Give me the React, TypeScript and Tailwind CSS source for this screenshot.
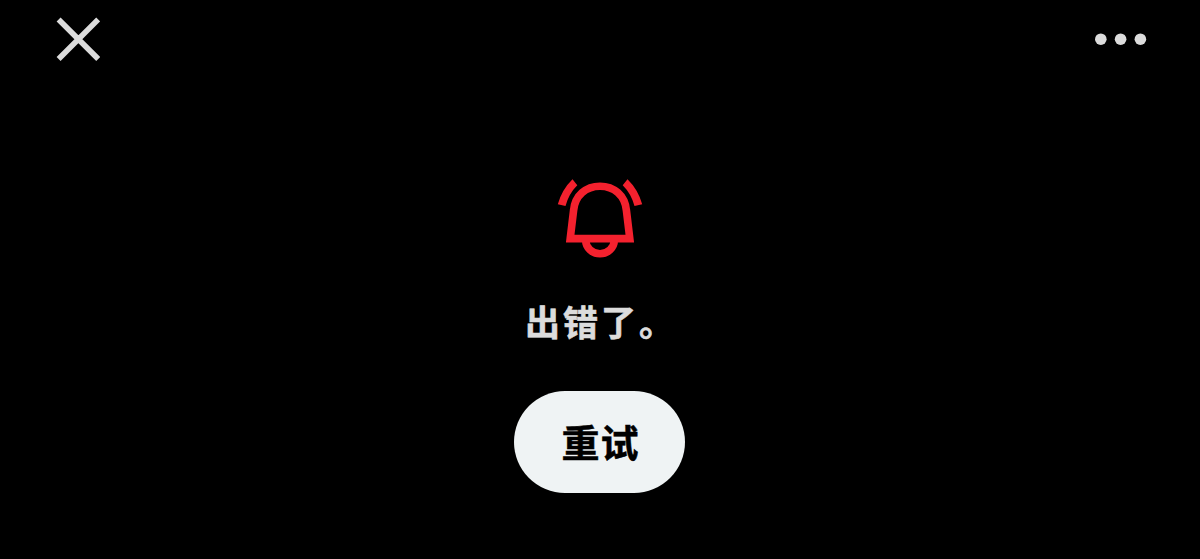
interface IconButtonProps {
  label: string;
  children: React.ReactNode;
}

function IconButton({ label, children }: IconButtonProps) {
  return (
    <button type="button" aria-label={label} className="block text-[#dcdcdc]">
      {children}
    </button>
  );
}

function CloseIcon() {
  return (
    <svg width="44" height="44" viewBox="0 0 44 44" fill="none" stroke="currentColor" strokeWidth="5.6">
      <path d="M2.6 2.4l39.6 39.6M42.2 2.4L2.6 42" />
    </svg>
  );
}

function MoreIcon() {
  return (
    <svg width="52" height="12" viewBox="0 0 52 12" fill="currentColor">
      <circle cx="5.8" cy="6.2" r="5.8" />
      <circle cx="25.6" cy="6.2" r="5.8" />
      <circle cx="45.4" cy="6.2" r="5.8" />
    </svg>
  );
}

function BellIcon() {
  return (
    <svg width="86" height="80" viewBox="12 14 86 80" className="text-[#f4212e]">
      <g fill="none" stroke="currentColor" strokeWidth="7.6">
        <path d="M25.2 73.6L28.6 45.3C30 30.5 41 21.2 55 21.2S80 30.5 81.4 45.3L84.8 73.6Z" />
        <path d="M40.7 75a14.3 13.8 0 0 0 28.6 0" />
      </g>
      <g fill="currentColor">
        <path d="M12.8 39.3Q17 24.5 27.5 14.3L32.3 20.3Q24 28.5 20.5 41Z" />
        <path d="M97.2 39.3Q93 24.5 82.5 14.3L77.7 20.3Q86 28.5 89.5 41Z" />
      </g>
    </svg>
  );
}

export default function App() {
  return (
    <div className="flex h-[559px] w-[1200px] flex-col overflow-hidden bg-black font-['Noto_Sans_CJK_SC',sans-serif]">
      <header className="flex h-[78px] items-center justify-between pr-[53px] pl-[56px]">
        <IconButton label="关闭">
          <CloseIcon />
        </IconButton>
        <IconButton label="更多">
          <MoreIcon />
        </IconButton>
      </header>

      <main className="flex flex-col items-center pt-[101px]">
        <BellIcon />
        <p className="mt-[34px] pl-[2px] text-[35px] leading-[56px] font-bold tracking-[3px] text-[#dcdcdc] [-webkit-text-stroke:0.6px_#dcdcdc]">
          出错了。
        </p>
        <button
          type="button"
          className="mt-[42px] mr-px flex h-[102px] w-[171px] items-center justify-center rounded-full bg-[#eff3f4] pb-[2px] pl-[2px] text-[38px] leading-none font-bold tracking-[1px] text-black [-webkit-text-stroke:0.5px_#000]"
        >
          重试
        </button>
      </main>
    </div>
  );
}
